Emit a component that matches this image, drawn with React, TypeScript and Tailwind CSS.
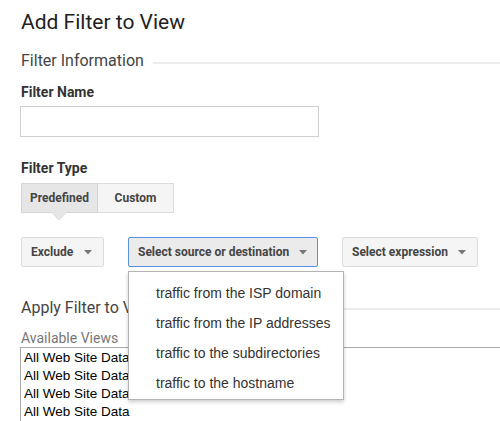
import React from "react";

function Arrow() {
  return (
    <svg width="8" height="5" viewBox="0 0 8 5" className="shrink-0">
      <path d="M0 0 L8 0 L4 4.5 Z" fill="#777" />
    </svg>
  );
}

export default function App() {
  const menu = [
    "traffic from the ISP domain",
    "traffic from the IP addresses",
    "traffic to the subdirectories",
    "traffic to the hostname",
  ];
  return (
    <div className="relative w-[500px] h-[421px] overflow-hidden bg-white pl-[20px] font-['Roboto',sans-serif]">
      <h1 className="pt-[9px] pl-[1px] text-[21px] leading-[26px] text-[#212121]">Add Filter to View</h1>

      <div className="mt-[16px] flex items-start gap-[9px]">
        <span className="pl-[1px] text-[16px] leading-[20px] text-[#444]">Filter Information</span>
        <div className="mt-[11px] h-[2px] flex-1 bg-[#ececec]" />
      </div>

      <div className="mt-[13px] pl-[1px] text-[14px] leading-[16px] font-bold text-[#333]">Filter Name</div>
      <div className="mt-[6px] h-[31px] w-[299px] border border-[#cfcfcf] bg-white" />

      <div className="mt-[23px] pl-[1px] text-[14px] leading-[16px] font-bold text-[#333]">Filter Type</div>

      <div className="relative mt-[7px] flex h-[30px] w-[154px] pl-[1px]">
        <div className="flex h-full w-[77px] items-center justify-center border border-[#d4d4d4] bg-[#e6e6e6] text-[12px] font-bold text-[#444]">
          Predefined
        </div>
        <div className="flex h-full w-[76px] items-center justify-center border border-l-0 border-[#dcdcdc] bg-[#f5f5f5] text-[12px] font-bold text-[#444]">
          Custom
        </div>
        <svg className="absolute left-[31px] top-[29px]" width="16" height="9" viewBox="0 0 16 9">
          <path d="M0 0 L16 0 L8 8 Z" fill="#e6e6e6" />
          <path d="M0 0 L8 8 L16 0" fill="none" stroke="#dcdcdc" strokeWidth="0.8" />
        </svg>
      </div>

      <div className="mt-[24px] flex items-start pl-[1px]">
        <div className="flex h-[30px] w-[83px] items-center justify-between rounded-[2px] border border-[#dcdcdc] bg-[#f5f5f5] pl-[9px] pr-[11px] text-[12px] font-bold text-[#444]">
          <span>Exclude</span>
          <Arrow />
        </div>
        <div className="relative ml-[24px]">
          <div className="flex h-[30px] w-[190px] items-center justify-between rounded-[2px] border border-[#5b8fe6] bg-[#ebebeb] pl-[9px] pr-[10px] text-[12px] font-bold text-[#444]">
            <span>Select source or destination</span>
            <Arrow />
          </div>
          <div className="absolute left-0 top-[34px] z-10 w-[216px] border border-[#b4b4b4] bg-white pt-[6px] pb-[1px] shadow-[0_2px_4px_rgba(0,0,0,0.2)] font-['Liberation_Sans',Arial,sans-serif] text-[14px] text-[#333]">
            {menu.map((m) => (
              <div key={m} className="flex h-[30px] items-center pl-[27px]">
                {m}
              </div>
            ))}
          </div>
        </div>
        <div className="ml-[24px] flex h-[30px] w-[136px] items-center justify-between rounded-[2px] border border-[#dcdcdc] bg-[#f5f5f5] pl-[9px] pr-[11px] text-[12px] font-bold text-[#444]">
          <span>Select expression</span>
          <Arrow />
        </div>
      </div>

      <div className="mt-[31px] flex items-start gap-[9px]">
        <span className="pl-[1px] text-[16px] leading-[20px] text-[#444]">Apply Filter to View</span>
        <div className="mt-[10px] h-[2px] flex-1 bg-[#ececec]" />
      </div>

      <div className="mt-[12px] pl-[1px] text-[14px] leading-[17px] text-[#777]">Available Views</div>
      <div className="w-[600px] border border-[#a9a9a9] pl-[3px] pt-[1px] font-['Liberation_Sans',Arial,sans-serif] text-[13.5px] leading-[18px] text-black">
        <div>All Web Site Data</div>
        <div>All Web Site Data</div>
        <div>All Web Site Data</div>
        <div>All Web Site Data</div>
      </div>
    </div>
  );
}
